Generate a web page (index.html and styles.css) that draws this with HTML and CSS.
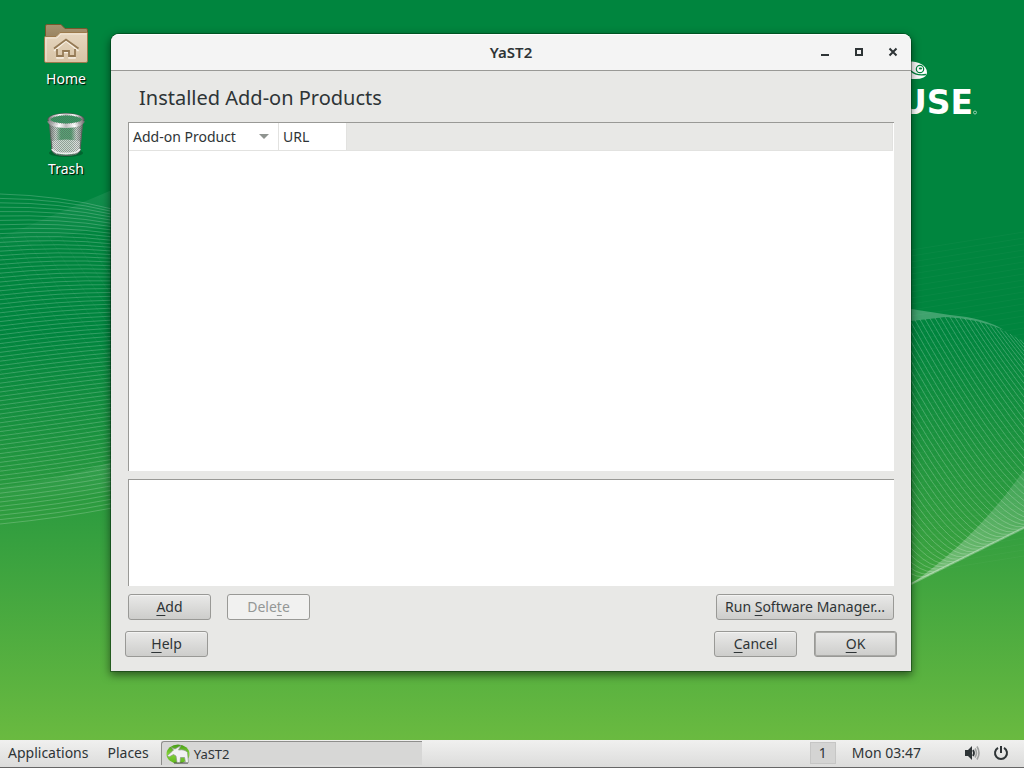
FILE: index.html
```html
<!DOCTYPE html>
<html lang="en">
<head>
<meta charset="utf-8">
<title>YaST2</title>
<link rel="stylesheet" href="styles.css">
</head>
<body>
<main class="desktop">
  <svg class="wallpaper" viewBox="0 0 1024 740" preserveAspectRatio="none" aria-hidden="true">
    <defs>
      <linearGradient id="fan" x1="0" y1="1" x2="1" y2="0">
        <stop offset="0" stop-color="#fff" stop-opacity=".3"/>
        <stop offset="1" stop-color="#fff" stop-opacity=".12"/>
      </linearGradient>
      <linearGradient id="band" x1="0" y1="0" x2="0" y2="1">
        <stop offset="0" stop-color="#fff" stop-opacity=".08"/>
        <stop offset="1" stop-color="#fff" stop-opacity="0"/>
      </linearGradient>
    </defs>
    <path d="M0 238Q60 212 112 190V225Q60 235 0 256Z" fill="url(#band)"/>
    <path d="M0 487Q60 480 112 462V492Q60 495 0 506Z" fill="url(#band)"/>
    <g id="mesh" fill="none" stroke="#fff"></g>
    <path d="M911 309L950 315Q985 318 1004 330Q975 318 945 317L911 321Z" fill="#fff" opacity=".25"/>
    <path d="M911 584Q975 540 1024 470V528Z" fill="url(#fan)"/>
    <path d="M911 584L1024 528" stroke="#fff" stroke-opacity=".3" stroke-width="2"/>
    <path d="M905 63Q912 60 919 63Q927 66 927 73Q926 79 915 79L905 79Z" fill="#fff"/>
    <circle cx="920" cy="69" r="3.7" fill="#fff" stroke="#00853e" stroke-width="1.2"/>
    <ellipse cx="920.5" cy="68.5" rx="1.7" ry="1.1" fill="#00853e"/>
    <path d="M911 71Q916 76 926 74.500" fill="none" stroke="#00853e" stroke-width="1.300"/>
    <text class="brand" x="973" y="114" text-anchor="end">USE</text>
    <circle cx="975" cy="112.500" r="1.500" fill="none" stroke="#cfe8d8" stroke-width=".7"/>
  </svg>

  <nav class="shortcuts" aria-label="Desktop">
    <a class="shortcut" href="#home">
      <svg width="48" height="48" viewBox="0 0 48 48" aria-hidden="true">
        <defs>
          <linearGradient id="fback" x1="0" y1="0" x2="0" y2="1"><stop stop-color="#a89370"/><stop offset="1" stop-color="#7c6745"/></linearGradient>
          <linearGradient id="ffront" x1="0" y1="0" x2="0" y2="1"><stop stop-color="#e6d6bf"/><stop offset="1" stop-color="#d8c4a6"/></linearGradient>
        </defs>
        <path d="M3.500 42V6Q3.500 4.500 5 4.500H19L23 8.500H44Q45.500 8.500 45.500 10V40Z" fill="url(#fback)" stroke="#77582c"/>
        <path d="M2.500 41V17.500Q2.500 16.500 3.500 16.500H14L18 12.500H44.500Q45.500 12.500 45.500 13.500V41Q45.500 42.500 44 42.500H4Q2.500 42.500 2.500 41Z" fill="url(#ffront)" stroke="#9c7a4c"/>
        <path d="M4 41.500V18H15L19 14H44.500" fill="none" stroke="#f2e8d8"/>
        <path d="M12 30L24 20L36.500 30M15 29V37H21V31.500H27V37H33V29" transform="translate(0 1)" fill="none" stroke="#f8f0e3" stroke-width="1.500"/>
        <path d="M12 28.500L24 19.500L36.500 28.500M15 29V36H21V31H27V36H33V29" fill="none" stroke="#947954" stroke-width="1.800"/>
      </svg>
      <span>Home</span>
    </a>
    <a class="shortcut" href="#trash">
      <svg width="48" height="48" viewBox="0 0 48 48" aria-hidden="true">
        <defs>
          <linearGradient id="can" x1="0" x2="1"><stop stop-color="#777"/><stop offset=".2" stop-color="#c9d2cd"/><stop offset=".35" stop-color="#5aa376"/><stop offset=".65" stop-color="#5aa376"/><stop offset=".8" stop-color="#c9d2cd"/><stop offset="1" stop-color="#777"/></linearGradient>
          <linearGradient id="rim" x1="0" x2="1"><stop stop-color="#888"/><stop offset=".3" stop-color="#fff"/><stop offset=".5" stop-color="#bbb"/><stop offset=".75" stop-color="#fff"/><stop offset="1" stop-color="#777"/></linearGradient>
          <pattern id="wire" width="2" height="2" patternUnits="userSpaceOnUse"><path d="M0 0h1v1H0zM1 1h1v1H1z" fill="#4b5c52" fill-opacity=".45"/></pattern>
        </defs>
        <ellipse cx="24" cy="43" rx="17" ry="4" fill="#003d1c" opacity=".45"/>
        <path d="M7 9L10 41Q12 45.500 24 45.500Q36 45.500 38 41L41 9Z" fill="url(#can)" stroke="#59635d"/>
        <path d="M10 31Q24 28 38 31L37 41Q24 47 11 41Z" fill="#e4e4e4" opacity=".8"/>
        <path d="M7 9L10 41Q12 45.500 24 45.500Q36 45.500 38 41L41 9Z" fill="url(#wire)"/>
        <path d="M10 39Q12 43.500 24 43.500Q36 43.500 38 39" fill="none" stroke="#eee" stroke-width="1.800"/>
        <ellipse cx="24" cy="9.500" rx="18.500" ry="6.500" fill="#555"/>
        <ellipse cx="24" cy="9.500" rx="16.500" ry="5" fill="#3a9b65" stroke="url(#rim)" stroke-width="2"/>
        <ellipse cx="24" cy="9.500" rx="16" ry="4.500" fill="url(#wire)"/>
        <path d="M6.500 11Q9 16.500 24 16.500Q39 16.500 41.500 11" fill="none" stroke="url(#rim)" stroke-width="3"/>
      </svg>
      <span>Trash</span>
    </a>
  </nav>

  <section class="window" aria-labelledby="win-title">
    <header class="titlebar">
      <h1 class="title" id="win-title">YaST2</h1>
      <div class="controls">
        <button class="control" aria-label="Minimize"><svg width="10" height="10"><path d="M1 7h8v2H1z" fill="#2e3436"/></svg></button>
        <button class="control" aria-label="Maximize"><svg width="10" height="10"><path d="M2 2h6v6H2z" fill="none" stroke="#2e3436" stroke-width="2"/></svg></button>
        <button class="control" aria-label="Close"><svg width="10" height="10"><path d="M1.500 1.500l7 7m0-7l-7 7" stroke="#2e3436" stroke-width="2"/></svg></button>
      </div>
    </header>
    <div class="content">
      <h2 class="heading">Installed Add-on Products</h2>
      <div class="list">
        <table class="products">
          <thead>
            <tr>
              <th class="col-product" scope="col"><span class="sort">Add-on Product<svg width="10" height="5"><path d="M0 0h10L5 5z" fill="#8f9490"/></svg></span></th>
              <th class="col-url" scope="col">URL</th>
              <td class="col-rest"></td>
            </tr>
          </thead>
        </table>
      </div>
      <div class="details"></div>
      <div class="actions">
        <button class="button"><u>A</u>dd</button>
        <button class="button" disabled>Dele<u>t</u>e</button>
        <button class="button wide push">Run <u>S</u>oftware Manager...</button>
      </div>
      <div class="actions dialog-actions">
        <button class="button"><u>H</u>elp</button>
        <button class="button push"><u>C</u>ancel</button>
        <button class="button default"><u>O</u>K</button>
      </div>
    </div>
  </section>
</main>

<footer class="panel">
  <button class="menu">Applications</button>
  <button class="menu">Places</button>
  <button class="task">
    <svg width="24" height="22" viewBox="0 1 24 22" aria-hidden="true">
      <defs><linearGradient id="ball" x1="0" y1="0" x2="0" y2="1"><stop stop-color="#459c15"/><stop offset=".5" stop-color="#83d338"/><stop offset="1" stop-color="#5db51e"/></linearGradient></defs>
      <ellipse cx="12" cy="12" rx="11.500" ry="9.500" fill="url(#ball)"/>
      <path d="M8 21h14" stroke="#555" stroke-width="2" opacity=".6"/>
      <path d="M1.500 13.500L6 9.500L7.500 8L5.500 5.500L9 7L15 3.500L12.500 8Q19 7 21.500 10.500L22.500 20.500H19.500L18.500 15.500H14.500L14 20.500H11L10 14L7.500 12.500L3 15Z" fill="#f2f2f2" stroke="#8b9488" stroke-width=".7"/>
    </svg>
    <span>YaST2</span>
  </button>
  <button class="workspace">1</button>
  <button class="clock">Mon 03:47</button>
  <button class="tray" aria-label="Volume">
    <svg width="16" height="16" viewBox="0 0 16 16"><path d="M1 5h3l4-4v14l-4-4H1z" fill="#2e3436"/><path d="M9 5q2 3 0 6" fill="none" stroke="#2e3436" stroke-width="1.800"/><path d="M11 3.500q3 4.500 0 9M13 1.500q4 6.500 0 13" fill="none" stroke="#a0a2a1" stroke-width="1.600"/></svg>
  </button>
  <button class="tray" aria-label="Power">
    <svg width="16" height="16" viewBox="0 0 16 16"><path d="M5 2.800A6 6 0 1 0 11 2.800M8 1v7" fill="none" stroke="#2e3436" stroke-width="2"/></svg>
  </button>
</footer>
<script src="mesh.js"></script>
</body>
</html>
```
FILE: styles.css
```css
* { box-sizing: border-box; }

body {
  margin: 0;
  height: 100vh;
  display: flex;
  flex-direction: column;
  overflow: hidden;
  color: #2e3436;
  font: 14px/20px "Noto Sans", "Open Sans", sans-serif;
}

button {
  margin: 0;
  padding: 0;
  border: 0;
  background: none;
  color: inherit;
  font: inherit;
}

svg { display: block; }

.desktop {
  position: relative;
  flex: 1;
  min-height: 0;
  background: linear-gradient(#00853e 45%, #6aba40);
}

.wallpaper {
  position: absolute;
  inset: 0;
  width: 100%;
  height: 100%;
}

.brand {
  fill: #fff;
  font: bold 33px "DejaVu Sans", sans-serif;
}

.shortcuts {
  position: relative;
  width: 132px;
  padding-top: 20px;
  display: flex;
  flex-direction: column;
  gap: 21px;
}

.shortcut {
  display: flex;
  flex-direction: column;
  align-items: center;
  gap: 1px;
  color: #fff;
  text-decoration: none;
  text-shadow: 1px 1px 1px #000;
}

.window {
  position: absolute;
  inset: 34px 113px 69px 111px;
  display: flex;
  flex-direction: column;
  border-radius: 8px 8px 0 0;
  background: #e8e8e6;
  box-shadow: 0 0 0 1px rgba(0, 40, 10, .4), 0 3px 8px 1px rgba(0, 0, 0, .5);
}

.titlebar {
  display: grid;
  grid-template-columns: 1fr auto 1fr;
  align-items: center;
  height: 37px;
  padding-bottom: 1px;
  border-top: 1px solid #fff;
  border-bottom: 1px solid #999996;
  border-radius: 8px 8px 0 0;
  background: #f4f4f4;
}

.title {
  grid-column: 2;
  margin: 0;
  font-size: 15px;
  line-height: 20px;
  font-weight: 600;
}

.controls {
  display: flex;
  justify-content: flex-end;
  gap: 14px;
  padding-right: 8px;
}

.control {
  display: grid;
  place-items: center;
  width: 20px;
  height: 20px;
}

.content {
  flex: 1;
  min-height: 0;
  display: flex;
  flex-direction: column;
  padding: 13px 17px 14px;
}

.heading {
  margin: 0 0 10px 11px;
  font-size: 20px;
  line-height: 28px;
  font-weight: 400;
}

.list,
.details {
  border-top: 1px solid #999996;
  border-left: 1px solid #999996;
  background: #fff;
}

.list {
  flex: 1;
  padding-right: 1px;
}

.details {
  height: 107px;
  margin: 8px 0;
}

.products {
  width: 100%;
  table-layout: fixed;
  border-collapse: separate;
  border-spacing: 0;
}

.products th,
.products td {
  height: 28px;
  padding: 0 4px;
  border-bottom: 1px solid #e2e2e0;
  border-right: 1px solid #e2e2e0;
  font-weight: 400;
  text-align: left;
}

.products .col-product { width: 150px; }
.products .col-url { width: 68px; }
.products .col-rest { background: #e8e8e6; }

.sort {
  display: flex;
  align-items: center;
  justify-content: space-between;
  padding-right: 5px;
}

.actions {
  display: flex;
  gap: 16px;
}

.dialog-actions {
  margin: 11px -3px 0;
  gap: 17px;
}

.push { margin-left: auto; }

.button {
  min-width: 83px;
  height: 26px;
  border: 1px solid #999996;
  border-radius: 3px;
  background: linear-gradient(#e9e9e8, #cdcdcb);
  box-shadow: inset 0 1px #f3f3f2;
}

.button.wide { padding: 0 8px; }

.button.default {
  box-shadow: inset 0 0 0 1px #a9a9a6;
}

.button:disabled {
  background: #f1f1f0;
  color: #949796;
}

.button u {
  text-underline-offset: 3px;
  text-decoration-thickness: 1px;
  text-decoration-skip-ink: none;
}

.panel {
  display: flex;
  align-items: center;
  height: 28px;
  padding: 0 15px 1px 8px;
  border-bottom: 1px solid #666;
  background: linear-gradient(#f0f0ef, #dcdcdb);
}

.menu { margin-right: 19px; }

.task {
  display: flex;
  align-items: center;
  gap: 4px;
  width: 261px;
  height: 24px;
  margin-left: -7px;
  padding: 0 4px;
  border: solid #8e8e8c;
  border-width: 1px 0 0 1px;
  border-radius: 3px 0 0 0;
  background: #d7d7d6;
  font-size: 13px;
}

.workspace {
  width: 26px;
  height: 22px;
  margin-left: auto;
  border: 1px solid #c6c6c5;
  background: #d4d4d3;
}

.clock { margin: 0 43px 0 16px; }

.tray + .tray { margin-left: 13px; }
```
FILE: mesh.js
```js
const mesh = document.getElementById("mesh");

function line(d, opacity) {
  const path = document.createElementNS("http://www.w3.org/2000/svg", "path");
  path.setAttribute("d", d);
  path.setAttribute("stroke-opacity", opacity);
  mesh.append(path);
}

// Left wave: near-horizontal strands with a faint diagonal weave
for (let i = 0; i <= 75; i++) {
  const t = i / 75;
  const start = 194 + 330 * t;
  const end = 209 + 299 * Math.pow(t, 1.12);
  const bend = (start + end) / 2 - 6 * (1 - t) + 2 * t;
  line(`M0 ${start}Q60 ${bend} 112 ${end}`, 0.2);
}
for (let x = -180; x < 112; x += 12) {
  line(`M${x} 235Q${x + 70} 350 ${x + 190} 480`, 0.03);
}

// Right side: faint rising strands
for (let y = 250; y < 580; y += 6) {
  line(`M911 ${y}L1024 ${y - 18}`, 0.03);
}

// Right wave: strands falling onto the lower edge
for (let s = 770; s < 1024; s += 5) {
  const top = s > 945 ? 317 + (s - 945) ** 2 * 0.004 : 317 + (945 - s) * 0.1;
  const cx = s + 115;
  const cy = 584 - (cx - 911) / 2;
  line(`M${s} ${top}Q${cx} ${cy} ${cx + 44} ${cy - 22}`, 0.22);
}
```
